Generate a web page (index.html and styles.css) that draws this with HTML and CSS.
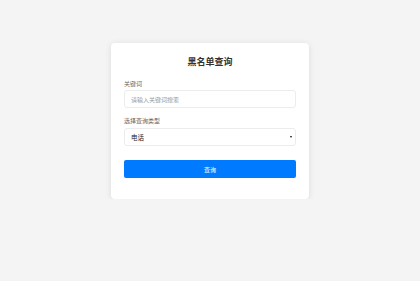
FILE: index.html
```html
<!DOCTYPE html>
<html lang="zh">
<head>
<meta charset="utf-8">
<title>黑名单查询</title>
<link rel="stylesheet" href="styles.css">
</head>
<body>
<main class="card">
  <h1 class="title">黑名单查询</h1>
  <label class="label" for="kw">关键词</label>
  <input class="field" id="kw" type="text" placeholder="请输入关键词搜索">
  <label class="label label-second" for="type">选择查询类型</label>
  <div class="select-wrap">
    <select class="field select" id="type">
      <option>电话</option>
      <option>姓名</option>
    </select>
  </div>
  <button class="btn" type="button">查询</button>
</main>
</body>
</html>
```

FILE: styles.css
```css
* { box-sizing: border-box; }
html, body { margin: 0; padding: 0; }
body {
  background: #f4f4f4;
  font-family: "Noto Sans CJK SC", "Noto Sans", sans-serif;
  padding-top: 43px;
  display: flex;
  justify-content: center;
}
.card {
  width: 198px;
  background: #fff;
  border-radius: 4px;
  box-shadow: 0 1px 6px rgba(0, 0, 0, 0.1);
  padding: 14px 13px 21px;
  display: flex;
  flex-direction: column;
}
.title {
  margin: 0 0 13px;
  font-size: 9px;
  line-height: 10px;
  font-weight: 700;
  color: #333;
  text-align: center;
}
.label {
  font-size: 6px;
  line-height: 8px;
  color: #666;
  margin-bottom: 2px;
}
.label-second {
  margin-top: 9px;
  margin-bottom: 3px;
}
.field {
  display: block;
  width: 100%;
  height: 18px;
  border: 1px solid #ececec;
  border-radius: 3px;
  padding: 0 6px;
  font-family: inherit;
  font-size: 6px;
  color: #222;
  background: #fff;
  outline: none;
}
.field::placeholder { color: #999; }
.select-wrap { position: relative; }
.select {
  -webkit-appearance: none;
  appearance: none;
  font-size: 6.5px;
  padding-left: 6px;
}
.select-wrap::after {
  content: "";
  position: absolute;
  right: 4px;
  top: 8px;
  border-left: 1.5px solid transparent;
  border-right: 1.5px solid transparent;
  border-top: 2px solid #111;
}
.btn {
  margin-top: 14px;
  height: 18px;
  border: 0;
  border-radius: 2px;
  background: #007bff;
  color: #fff;
  font-family: inherit;
  font-size: 6px;
  padding: 0;
}
```
